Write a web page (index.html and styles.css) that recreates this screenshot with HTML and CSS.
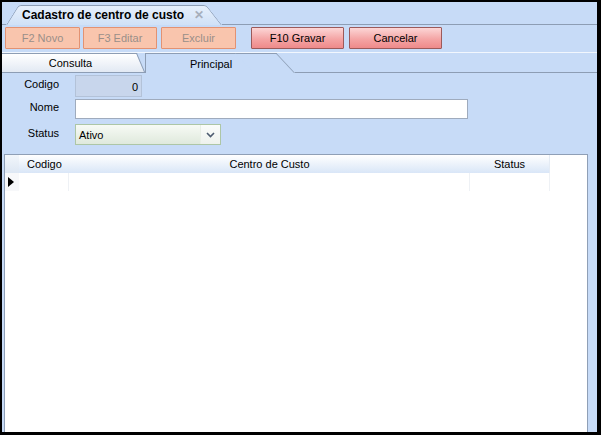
FILE: index.html
```html
<!DOCTYPE html>
<html lang="pt-BR">
<head>
    <meta charset="UTF-8">
    <title>Cadastro de centro de custo</title>
    <link rel="stylesheet" href="styles.css">
</head>
<body>
    <div class="window">
        <!-- Aba do documento -->
        <div class="titlebar">
            <div class="title-edge"></div>
            <div class="doc-tab">
                <span class="doc-title">Cadastro de centro de custo</span>
                <span class="doc-close">✕</span>
            </div>
            <div class="title-fill"></div>
        </div>

        <!-- Barra de botões -->
        <div class="toolbar">
            <button class="btn btn-off btn-novo">F2 Novo</button>
            <button class="btn btn-off btn-editar">F3 Editar</button>
            <button class="btn btn-off">Excluir</button>
            <button class="btn btn-on btn-gravar">F10 Gravar</button>
            <button class="btn btn-on">Cancelar</button>
        </div>

        <!-- Abas -->
        <div class="tabs">
            <div class="tab tab-consulta">Consulta</div>
            <div class="tab tab-principal">Principal</div>
            <div class="tab-fill"></div>
        </div>

        <!-- Campos -->
        <div class="form">
            <label class="lbl lbl-codigo">Codigo</label>
            <div class="field field-codigo">0</div>

            <label class="lbl lbl-nome">Nome</label>
            <div class="field field-nome"></div>

            <label class="lbl lbl-status">Status</label>
            <div class="field field-status">
                <span class="status-text">Ativo</span>
                <span class="status-arrow">
                    <svg width="9" height="6" viewBox="0 0 9 6"><path d="M1 1 L4.5 4.5 L8 1" fill="none" stroke="#4d5b70" stroke-width="1.6"/></svg>
                </span>
            </div>
        </div>

        <!-- Grade -->
        <div class="grid">
            <div class="grid-head">
                <div class="col col-ind"></div>
                <div class="col col-codigo">Codigo</div>
                <div class="col col-centro">Centro de Custo</div>
                <div class="col col-status">Status</div>
            </div>
            <div class="grid-row">
                <div class="col col-ind"><span class="row-pointer"></span></div>
                <div class="col col-codigo"></div>
                <div class="col col-centro"></div>
                <div class="col col-status"></div>
            </div>
        </div>
    </div>
</body>
</html>
```

FILE: styles.css
```css
body {
    margin: 0;
    padding: 0;
    background-color: #000;
    font-family: 'Liberation Sans', Arial, sans-serif;
    font-size: 11px;
    color: #111;
}
.window {
    width: 601px;
    height: 435px;
    box-sizing: border-box;
    border-style: solid;
    border-color: #000;
    border-width: 2px 4px 3px 2px;
    background-color: #c7dbf7;
    display: flex;
    flex-direction: column;
    overflow: hidden;
}

/* aba do documento */
.titlebar {
    display: flex;
    height: 23px;
}
.title-edge {
    width: 4px;
    border-bottom: 1px solid #8d9db4;
}
.title-fill {
    flex: 1;
    border-bottom: 1px solid #8d9db4;
}
.doc-tab {
    position: relative;
    z-index: 0;
    width: 216px;
    height: 23px;
    box-sizing: border-box;
    padding: 3px 0 0 16px;
    display: flex;
    align-items: center;
}
.doc-tab::before,
.doc-tab::after {
    content: "";
    position: absolute;
    top: 3px;
    bottom: 0;
    width: 60%;
    z-index: -1;
    background: linear-gradient(#e6effb, #d0e1f7);
    border-top: 1px solid #8d9db4;
    transform-origin: bottom;
}
.doc-tab::before {
    left: 0;
    border-left: 1px solid #8d9db4;
    border-top-left-radius: 3px;
    transform: skewX(-32deg);
}
.doc-tab::after {
    right: 0;
    border-right: 1px solid #8d9db4;
    border-top-right-radius: 3px;
    transform: skewX(38deg);
}
.doc-title {
    font-size: 12px;
    font-weight: bold;
    color: #000;
}
.doc-close {
    margin-left: 10px;
    font-size: 12px;
    font-weight: bold;
    color: #a6aebb;
}

/* botões */
.toolbar {
    display: flex;
    padding: 2px 3px 3px 3px;
    border-bottom: 1px solid #f2f7fe;
}
.btn {
    height: 22px;
    padding: 0;
    margin-right: 4px;
    font-family: 'Liberation Sans', Arial, sans-serif;
    font-size: 11px;
    border-radius: 1px;
}
.btn-off {
    width: 75px;
    background-color: #f9c5ad;
    border: 1px solid #e39272;
    color: #9a8f89;
}
.btn-novo {
    margin-right: 3px;
}
.btn-editar {
    width: 74px;
}
.btn-on {
    width: 93px;
    background: linear-gradient(#fcd6d6, #f4a5a5 55%, #ef8a8a);
    border: 1px solid #9c5a5a;
    color: #000;
}
.btn-gravar {
    margin-left: 11px;
    margin-right: 5px;
}

/* abas */
.tabs {
    display: flex;
    height: 20px;
}
.tab {
    position: relative;
    z-index: 0;
    box-sizing: border-box;
    height: 20px;
    display: flex;
    align-items: center;
    justify-content: center;
    font-size: 11px;
    color: #000;
}
.tab-consulta {
    width: 143px;
    border-bottom: 1px solid #8d9db4;
    padding-right: 6px;
    padding-top: 1px;
}
.tab-consulta::before {
    content: "";
    position: absolute;
    top: 0;
    bottom: 0;
    left: -12px;
    right: 0;
    z-index: -1;
    background: linear-gradient(#ffffff, #e2e9f3);
    border-top: 1px solid #8d9db4;
    border-right: 1px solid #8d9db4;
    transform-origin: bottom;
    transform: skewX(23deg);
}
.tab-principal {
    width: 150px;
    padding-right: 18px;
    padding-top: 1px;
}
.tab-principal::before {
    content: "";
    position: absolute;
    top: 0;
    bottom: 0;
    left: 0;
    right: 18px;
    z-index: -1;
    background-color: #c7dbf7;
    border-top: 1px solid #8d9db4;
    border-left: 1px solid #8d9db4;
}
.tab-principal::after {
    content: "";
    position: absolute;
    top: 0;
    bottom: 0;
    right: 0;
    width: 40px;
    z-index: -1;
    background-color: #c7dbf7;
    border-top: 1px solid #8d9db4;
    border-right: 1px solid #8d9db4;
    transform-origin: bottom;
    transform: skewX(43deg);
}
.tab-fill {
    flex: 1;
    border-bottom: 1px solid #8d9db4;
}

/* campos */
.form {
    display: grid;
    grid-template-columns: 73px auto;
    grid-template-rows: 22px 20px 21px;
    row-gap: 2px;
    justify-items: start;
    padding-top: 2px;
}
.lbl {
    justify-self: end;
    padding-right: 16px;
    line-height: 13px;
    color: #000;
}
.lbl-codigo { padding-top: 3px; }
.lbl-nome { padding-top: 2px; }
.lbl-status { padding-top: 6px; }
.field {
    box-sizing: border-box;
    line-height: 13px;
}
.field-codigo {
    width: 67px;
    height: 22px;
    background-color: #c8d6ec;
    border: 1px solid #b3c2d8;
    text-align: right;
    padding: 5px 3px 0 0;
    color: #000;
}
.field-nome {
    width: 393px;
    height: 20px;
    background-color: #fff;
    border: 1px solid #9fabbd;
}
.field-status {
    margin-top: 3px;
    width: 146px;
    height: 21px;
    display: flex;
    border: 1px solid #adc6a6;
    background: linear-gradient(#f7faf5, #dfe9dc);
}
.status-text {
    flex: 1;
    padding: 4px 0 0 3px;
    color: #000;
    border-right: 1px solid #e9efe6;
}
.status-arrow {
    width: 19px;
    display: flex;
    align-items: center;
    justify-content: center;
    background: linear-gradient(#fbfcfb, #eef2ed);
}

/* grade */
.grid {
    flex: 1;
    margin: 12px 9px 0 2px;
    background-color: #fff;
    border: 1px solid #8f9fb6;
    border-bottom: none;
}
.grid-head,
.grid-row {
    display: flex;
    height: 18px;
}
.grid-head {
    width: 544px;
    background: linear-gradient(#ffffff, #d9e6f7);
    border-right: 1px solid #e4ebf4;
}
.grid-row {
    width: 544px;
    border-right: 1px solid #eef1f5;
}
.col {
    box-sizing: border-box;
    height: 18px;
    line-height: 18px;
    color: #000;
}
.col-ind {
    width: 14px;
    display: flex;
    align-items: center;
    padding-left: 3px;
}
.grid-head .col-ind {
    background: linear-gradient(#f2f6fb, #dde7f3);
}
.grid-row .col-ind {
    background-color: #f7f8fa;
}
.col-codigo {
    width: 50px;
    padding-left: 8px;
}
.col-centro {
    width: 401px;
    text-align: center;
}
.col-status {
    width: 79px;
    text-align: center;
}
.grid-row .col-codigo,
.grid-row .col-centro {
    border-right: 1px solid #eef1f5;
}
.row-pointer {
    width: 0;
    height: 0;
    border-left: 6px solid #000;
    border-top: 5px solid transparent;
    border-bottom: 5px solid transparent;
}
```
